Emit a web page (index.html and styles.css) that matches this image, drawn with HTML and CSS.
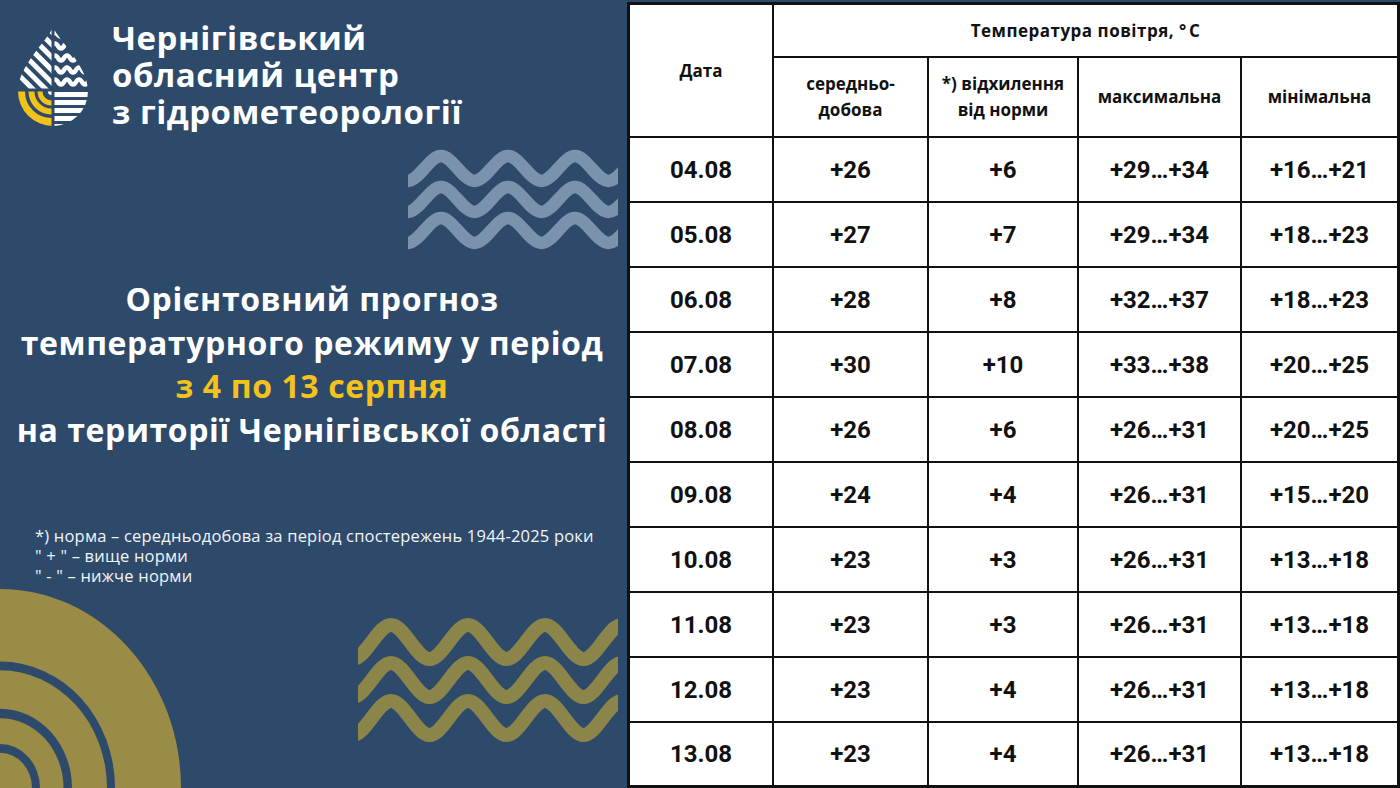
FILE: index.html
```html
<!DOCTYPE html>
<html lang="uk">
<head>
<meta charset="utf-8">
<title>Орієнтовний прогноз температурного режиму</title>
<link rel="stylesheet" href="styles.css">
</head>
<body>
<div class="page">
  <section class="left">
    <header class="brand">
      <svg class="logo" width="76" height="102" viewBox="0 0 76 102" aria-hidden="true">
        <defs>
          <clipPath id="drop"><path d="M37 1 C42 14 72 40 72 65 A35 35 0 0 1 2 65 C2 40 32 14 37 1 Z"/></clipPath>
          <clipPath id="qtl"><rect x="0" y="0" width="35.5" height="62.5"/></clipPath>
          <clipPath id="qtr"><rect x="38.5" y="0" width="40" height="62.5"/></clipPath>
          <clipPath id="qbl"><rect x="0" y="65.5" width="35.5" height="40"/></clipPath>
          <clipPath id="qbr"><rect x="38.5" y="65.5" width="40" height="40"/></clipPath>
        </defs>
        <g clip-path="url(#drop)">
          <g clip-path="url(#qtl)" stroke="#fff" stroke-width="5">
            <line x1="-10" y1="-40" x2="80" y2="50"/>
            <line x1="-10" y1="-27.3" x2="80" y2="62.7"/>
            <line x1="-10" y1="-14.6" x2="80" y2="75.4"/>
            <line x1="-10" y1="-1.9" x2="80" y2="88.1"/>
            <line x1="-10" y1="10.8" x2="80" y2="100.8"/>
            <line x1="-10" y1="23.5" x2="80" y2="113.5"/>
            <line x1="-10" y1="36.2" x2="80" y2="126.2"/>
          </g>
          <g clip-path="url(#qtr)" stroke="#fff" stroke-width="4.5" fill="none">
            <path d="M36 9 q3 -4 6 0 t6 0 t6 0 t6 0 t6 0 t6 0 t6 0"/>
            <path d="M36 20 q3 -5 6 0 t6 0 t6 0 t6 0 t6 0 t6 0 t6 0"/>
            <path d="M36 32 q3 -5 6 0 t6 0 t6 0 t6 0 t6 0 t6 0 t6 0"/>
            <path d="M36 44 q3 -5 6 0 t6 0 t6 0 t6 0 t6 0 t6 0 t6 0"/>
            <path d="M36 56 q3 -5 6 0 t6 0 t6 0 t6 0 t6 0 t6 0 t6 0"/>
          </g>
          <g clip-path="url(#qbl)" fill="none">
            <circle cx="35.5" cy="65.5" r="3.5" fill="#fff"/>
            <circle cx="35.5" cy="65.5" r="11.5" stroke="#f2c21b" stroke-width="5"/>
            <circle cx="35.5" cy="65.5" r="20" stroke="#f2c21b" stroke-width="6"/>
            <circle cx="35.5" cy="65.5" r="31" stroke="#f2c21b" stroke-width="9"/>
          </g>
          <g clip-path="url(#qbr)" fill="#fff">
            <rect x="38" y="66" width="40" height="5"/>
            <rect x="38" y="74" width="40" height="5"/>
            <rect x="38" y="82" width="40" height="5"/>
            <rect x="38" y="90" width="40" height="5"/>
            <rect x="38" y="98" width="40" height="5"/>
          </g>
        </g>
      </svg>
      <div class="brand-name"><span class="bl">Чернігівський</span><span class="bl">обласний центр</span><span class="bl">з гідрометеорології</span></div>
    </header>

    <div class="waves-row">
      <svg class="waves-top" width="210" height="105" viewBox="0 0 210 105" aria-hidden="true">
        <g fill="none" stroke="#7b92ad" stroke-width="12.5">
          <path d="M-0.5 36 c11.5 0 22 -25 33.5 -25 s22 25 33.5 25 s22 -25 33.5 -25 s22 25 33.5 25 s22 -25 33.5 -25 s22 25 33.5 25 s22 -25 33.5 -25"/>
          <path transform="translate(0 31)" d="M-0.5 36 c11.5 0 22 -25 33.5 -25 s22 25 33.5 25 s22 -25 33.5 -25 s22 25 33.5 25 s22 -25 33.5 -25 s22 25 33.5 25 s22 -25 33.5 -25"/>
          <path transform="translate(0 62)" d="M-0.5 36 c11.5 0 22 -25 33.5 -25 s22 25 33.5 25 s22 -25 33.5 -25 s22 25 33.5 25 s22 -25 33.5 -25 s22 25 33.5 25 s22 -25 33.5 -25"/>
        </g>
      </svg>
    </div>

    <h1 class="headline">
      <span class="line">Орієнтовний прогноз</span>
      <span class="line">температурного режиму у період</span>
      <span class="line accent">з 4 по 13 серпня</span>
      <span class="line">на території Чернігівської області</span>
    </h1>

    <div class="note">
      <p>*) норма – середньодобова за період спостережень 1944-2025 роки</p>
      <p>" + " – вище норми</p>
      <p>" - " – нижче норми</p>
    </div>

    <div class="bottom">
      <svg class="arcs" width="182" height="200" viewBox="0 0 182 200" aria-hidden="true">
        <g transform="translate(0 200) scale(1 1.1)">
          <circle r="181" fill="#9a8b47"/>
          <circle r="115" fill="#2e4a6b"/>
          <circle r="107" fill="#9a8b47"/>
          <circle r="72" fill="#2e4a6b"/>
          <circle r="63.5" fill="#9a8b47"/>
          <circle r="40" fill="#2e4a6b"/>
          <circle r="32" fill="#9a8b47"/>
        </g>
      </svg>
      <svg class="waves-gold" width="260" height="124" viewBox="0 0 260 124" aria-hidden="true">
        <g fill="none" stroke="#8c8549" stroke-width="14">
          <path d="M-5.5 41 c13 0 25.5 -34 38.5 -34 s25.5 34 38.5 34 s25.5 -34 38.5 -34 s25.5 34 38.5 34 s25.5 -34 38.5 -34 s25.5 34 38.5 34 s25.5 -34 38.5 -34 s25.5 34 38.5 34"/>
          <path transform="translate(0 38)" d="M-5.5 41 c13 0 25.5 -34 38.5 -34 s25.5 34 38.5 34 s25.5 -34 38.5 -34 s25.5 34 38.5 34 s25.5 -34 38.5 -34 s25.5 34 38.5 34 s25.5 -34 38.5 -34 s25.5 34 38.5 34"/>
          <path transform="translate(0 76)" d="M-5.5 41 c13 0 25.5 -34 38.5 -34 s25.5 34 38.5 34 s25.5 -34 38.5 -34 s25.5 34 38.5 34 s25.5 -34 38.5 -34 s25.5 34 38.5 34 s25.5 -34 38.5 -34 s25.5 34 38.5 34"/>
        </g>
      </svg>
    </div>
  </section>

  <section class="grid">
    <div class="cell head date-head">Дата</div>
    <div class="cell head temp-head">Температура повітря, °&#8202;С</div>
    <div class="cell head">середньо-<br>добова</div>
    <div class="cell head">*) відхилення<br>від норми</div>
    <div class="cell head">максимальна</div>
    <div class="cell head">мінімальна</div>

    <div class="cell">04.08</div><div class="cell">+26</div><div class="cell">+6</div><div class="cell">+29…+34</div><div class="cell">+16…+21</div>
    <div class="cell">05.08</div><div class="cell">+27</div><div class="cell">+7</div><div class="cell">+29…+34</div><div class="cell">+18…+23</div>
    <div class="cell">06.08</div><div class="cell">+28</div><div class="cell">+8</div><div class="cell">+32…+37</div><div class="cell">+18…+23</div>
    <div class="cell">07.08</div><div class="cell">+30</div><div class="cell">+10</div><div class="cell">+33…+38</div><div class="cell">+20…+25</div>
    <div class="cell">08.08</div><div class="cell">+26</div><div class="cell">+6</div><div class="cell">+26…+31</div><div class="cell">+20…+25</div>
    <div class="cell">09.08</div><div class="cell">+24</div><div class="cell">+4</div><div class="cell">+26…+31</div><div class="cell">+15…+20</div>
    <div class="cell">10.08</div><div class="cell">+23</div><div class="cell">+3</div><div class="cell">+26…+31</div><div class="cell">+13…+18</div>
    <div class="cell">11.08</div><div class="cell">+23</div><div class="cell">+3</div><div class="cell">+26…+31</div><div class="cell">+13…+18</div>
    <div class="cell">12.08</div><div class="cell">+23</div><div class="cell">+4</div><div class="cell">+26…+31</div><div class="cell">+13…+18</div>
    <div class="cell">13.08</div><div class="cell">+23</div><div class="cell">+4</div><div class="cell">+26…+31</div><div class="cell">+13…+18</div>
  </section>
</div>
</body>
</html>
```

FILE: styles.css
```css
* { box-sizing: border-box; }
html, body { margin: 0; padding: 0; }
body {
  width: 1400px;
  height: 788px;
  overflow: hidden;
  background: #2e4a6b;
}
.page {
  display: flex;
  width: 1400px;
  height: 788px;
  background: #2e4a6b;
}

/* Left panel */
.left {
  width: 627px;
  height: 788px;
  display: flex;
  flex-direction: column;
  color: #fff;
  font-family: "Open Sans", "Noto Sans", sans-serif;
}
.brand {
  display: flex;
  align-items: flex-start;
  padding: 19px 0 0 16px;
}
.logo {
  display: block;
  margin-top: 7px;
  flex: none;
}
.brand-name {
  margin-left: 20px;
  font-weight: 700;
  font-size: 33px;
  line-height: 37px;
  letter-spacing: 0.5px;
}
.brand-name .bl {
  display: block;
  height: 37px;
}
.waves-row {
  display: flex;
  justify-content: flex-end;
  padding-right: 9px;
  margin-top: 15px;
}
.waves-top { display: block; }

.headline {
  margin: 27px 3px 0 0;
  font-weight: 700;
  font-size: 32px;
  line-height: 43.5px;
  letter-spacing: 0.6px;
  text-align: center;
}
.headline .line { display: block; }
.headline .accent { color: #f4c21d; }

.note {
  margin-top: 75px;
  padding-left: 35px;
  font-size: 16.5px;
  line-height: 20px;
  letter-spacing: 0.2px;
  color: #f2f4f7;
}
.note p { margin: 0; }

.bottom {
  margin-top: auto;
  display: flex;
  justify-content: space-between;
  align-items: flex-end;
}
.arcs { display: block; }
.waves-gold {
  display: block;
  margin: 0 9px 46px 0;
}

/* Table */
.grid {
  width: 773px;
  height: 786px;
  margin-top: 2px;
  padding: 3px;
  background: #111;
  display: grid;
  grid-template-columns: 142px 153px 148px 161px 155px;
  grid-template-rows: 51px 78px repeat(9, 63px) 62px;
  gap: 2px;
  font-family: "Roboto", "Liberation Sans", sans-serif;
  color: #111;
}
.cell {
  background: #fff;
  display: flex;
  align-items: center;
  justify-content: center;
  text-align: center;
  font-weight: 700;
  font-size: 24px;
}
.head {
  font-family: "Open Sans", "Noto Sans", sans-serif;
  font-size: 17px;
  line-height: 26px;
}
.date-head { grid-row: 1 / span 2; }
.temp-head {
  grid-column: 2 / span 4;
  letter-spacing: 0.5px;
}
```
